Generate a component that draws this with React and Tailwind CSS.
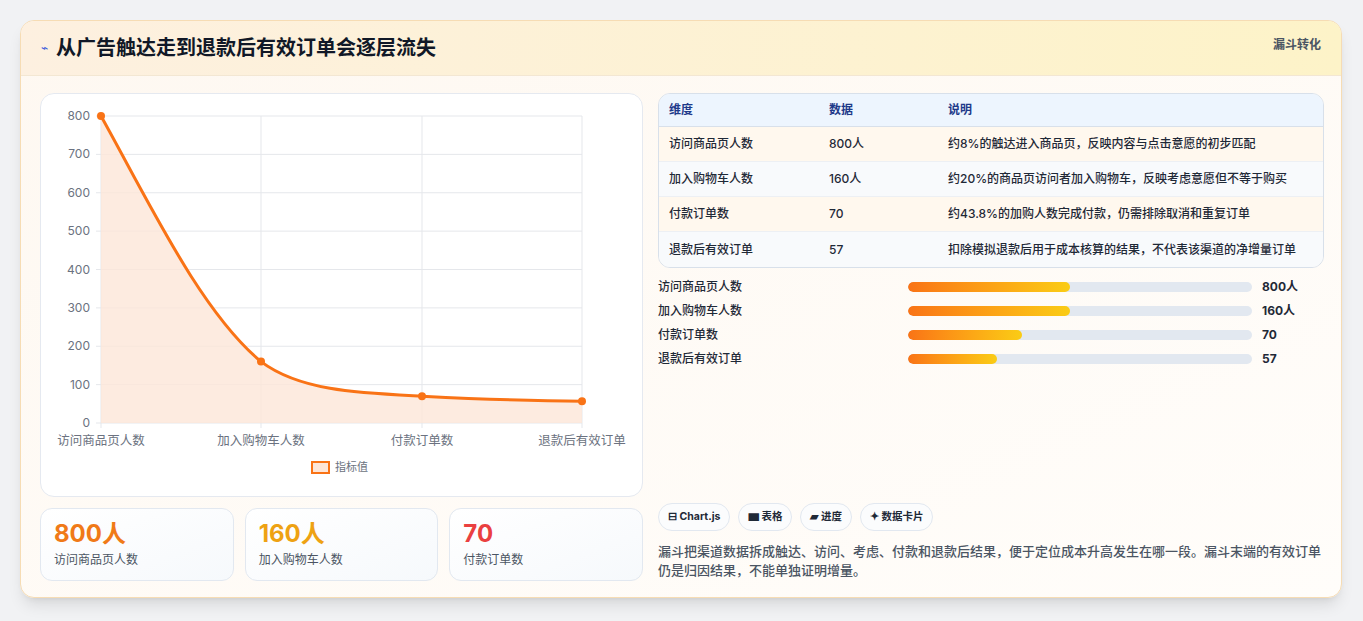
import React from "react";

const font = { fontFamily: '"Inter","Noto Sans CJK SC",sans-serif' };

function Chart() {
  const x = [100, 260, 421, 581];
  const v = [800, 160, 70, 57];
  const y = (n) => 422 - (n / 800) * 307;
  const X0 = 40, Y0 = 93;
  const pts = x.map((xx, i) => [xx - X0, y(v[i]) - Y0]);
  const line = `M${pts[0][0]},${pts[0][1]} C${pts[0][0] + 50},${pts[0][1] + 90} ${pts[1][0] - 60},${pts[1][1] - 50} ${pts[1][0]},${pts[1][1]} C${pts[1][0] + 40},${pts[1][1] + 30} ${pts[2][0] - 60},${pts[2][1] - 3} ${pts[2][0]},${pts[2][1]} C${pts[2][0] + 60},${pts[2][1] + 3} ${pts[3][0] - 60},${pts[3][1]} ${pts[3][0]},${pts[3][1]}`;
  const base = 422 - Y0;
  const labels = ["访问商品页人数", "加入购物车人数", "付款订单数", "退款后有效订单"];
  return (
    <svg width="602" height="403" className="block">
      {[0, 100, 200, 300, 400, 500, 600, 700, 800].map((t) => (
        <g key={t}>
          <line x1={60} x2={541} y1={y(t) - Y0} y2={y(t) - Y0} stroke="#e5e7eb" />
          <line x1={55} x2={60} y1={y(t) - Y0} y2={y(t) - Y0} stroke="#e5e7eb" />
          <text x={49} y={y(t) - Y0 + 4} textAnchor="end" fontSize="12" fill="#6b7280" style={font}>{t}</text>
        </g>
      ))}
      {x.map((xx) => (
        <line key={xx} x1={xx - X0} x2={xx - X0} y1={22} y2={base + 5} stroke="#e5e7eb" />
      ))}
      <path d={`${line} L${pts[3][0]},${base} L${pts[0][0]},${base} Z`} fill="#fde6d8" opacity="0.8" />
      <path d={line} fill="none" stroke="#f97316" strokeWidth="3" />
      {pts.map((p, i) => (
        <circle key={i} cx={p[0]} cy={p[1]} r="4" fill="#f97316" />
      ))}
      {labels.map((l, i) => (
        <text key={l} x={x[i] - X0} y={351} textAnchor="middle" fontSize="12.5" fill="#6b7280" style={font}>{l}</text>
      ))}
      <rect x={271} y={368} width={17} height={11} fill="#fde6d8" stroke="#f97316" strokeWidth="2" />
      <text x={294} y={377} fontSize="11" fill="#6b7280" style={font}>指标值</text>
    </svg>
  );
}

const rows = [
  ["访问商品页人数", "800人", "约8%的触达进入商品页，反映内容与点击意愿的初步匹配"],
  ["加入购物车人数", "160人", "约20%的商品页访问者加入购物车，反映考虑意愿但不等于购买"],
  ["付款订单数", "70", "约43.8%的加购人数完成付款，仍需排除取消和重复订单"],
  ["退款后有效订单", "57", "扣除模拟退款后用于成本核算的结果，不代表该渠道的净增量订单"],
];
const bars = [["访问商品页人数", "800人", 47], ["加入购物车人数", "160人", 47], ["付款订单数", "70", 33], ["退款后有效订单", "57", 26]];

export default function App() {
  return (
    <div className="w-[1363px] h-[621px] bg-[#f1f2f4] pt-[20px] pl-[20px]" style={font}>
      <div className="w-[1322px] h-[578px] rounded-[14px] border border-[#f6dcb4] overflow-hidden bg-gradient-to-br from-[#fef8f1] to-[#fffdfa] shadow-lg flex flex-col">
        <div className="h-[55px] flex items-center justify-between px-[20px] bg-gradient-to-r from-[#fdf0e0] to-[#fdf3c8] border-b border-[#f3e7d3]">
          <div className="flex items-center gap-[8px]">
            <span className="text-[#3b5bdb] text-[12px]">⌁</span>
            <span className="text-[20px] font-bold text-[#111827]">从广告触达走到退款后有效订单会逐层流失</span>
          </div>
          <span className="text-[12px] font-bold text-[#4b5563] self-start mt-[15px]">漏斗转化</span>
        </div>
        <div className="flex gap-[15px] px-[19px] pt-[17px]">
          <div className="w-[603px] flex flex-col gap-[11px]">
            <div className="h-[404px] rounded-[14px] border border-[#e5e9f0] bg-white">
              <Chart />
            </div>
            <div className="grid grid-cols-3 gap-[11px]">
              {[["800人", "text-[#f07a18]", "访问商品页人数"], ["160人", "text-[#eea213]", "加入购物车人数"], ["70", "text-[#ea4040]", "付款订单数"]].map(([n, c, l]) => (
                <div key={l} className="h-[73px] rounded-[12px] border border-[#e2e8f0] bg-gradient-to-br from-white to-[#f6f9fc] px-[13px] pt-[10px]">
                  <div className={`text-[24px] font-bold leading-[30px] ${c}`}>{n}</div>
                  <div className="text-[12px] text-[#4b5563] mt-[2px]">{l}</div>
                </div>
              ))}
            </div>
          </div>
          <div className="flex-1 flex flex-col">
            <div className="w-[666px] rounded-[12px] border border-[#d8e0ea] overflow-hidden text-[12px] font-medium">
              <div className="flex h-[33px] items-center bg-[#edf5fe] border-b border-[#d8e0ea] text-[#1e3a8a] font-bold">
                <div className="w-[170px] pl-[10px]">维度</div>
                <div className="w-[119px]">数据</div>
                <div>说明</div>
              </div>
              {rows.map((r, i) => (
                <div key={i} className={`flex h-[35px] items-center text-[#1f2937] ${i % 2 ? "bg-[#f8fafc]" : "bg-[#fff8ee]"} ${i < 3 ? "border-b border-[#edf0f4]" : ""}`}>
                  <div className="w-[170px] pl-[10px]">{r[0]}</div>
                  <div className="w-[119px]">{r[1]}</div>
                  <div>{r[2]}</div>
                </div>
              ))}
            </div>
            <div className="mt-[10px] flex flex-col gap-[7px]">
              {bars.map(([l, n, p]) => (
                <div key={l} className="flex items-center h-[17px] text-[12px] font-medium text-[#1f2937]">
                  <div className="w-[250px]">{l}</div>
                  <div className="w-[344px] h-[10px] rounded-full bg-[#e2e8f0] overflow-hidden">
                    <div className="h-full rounded-full bg-gradient-to-r from-[#f97316] to-[#facc15]" style={{ width: `${p}%` }} />
                  </div>
                  <div className="ml-[10px] font-bold">{n}</div>
                </div>
              ))}
            </div>
            <div className="mt-[136px] flex gap-[8px]">
              {["⊟ Chart.js", "▆ 表格", "▰ 进度", "✦ 数据卡片"].map((t) => (
                <div key={t} className="h-[28px] px-[9px] rounded-full border border-[#e2e8f0] bg-[#fbfcfd] text-[10.5px] font-bold text-[#1f2937] flex items-center">{t}</div>
              ))}
            </div>
            <p className="mt-[11px] text-[13px] leading-[19px] font-medium text-[#4b5563] w-[666px]">漏斗把渠道数据拆成触达、访问、考虑、付款和退款后结果，便于定位成本升高发生在哪一段。漏斗末端的有效订单仍是归因结果，不能单独证明增量。</p>
          </div>
        </div>
      </div>
    </div>
  );
}
